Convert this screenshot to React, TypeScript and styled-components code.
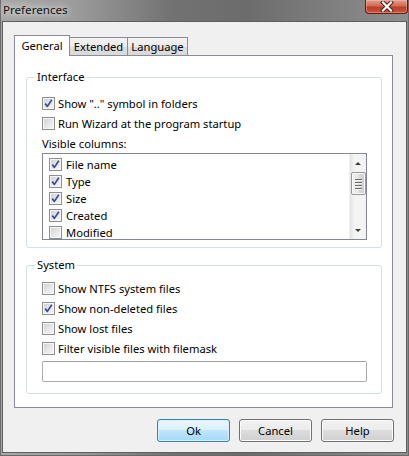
import styled, { createGlobalStyle, css } from "styled-components";

const GlobalStyle = createGlobalStyle`
  html, body {
    margin: 0;
    padding: 0;
    background: #8c8c8c;
  }
  * {
    box-sizing: border-box;
  }
`;

const uiFont = `"Noto Sans", "Open Sans", Arial, sans-serif`;

const columns = [
  { name: "File name", checked: true },
  { name: "Type", checked: true },
  { name: "Size", checked: true },
  { name: "Created", checked: true },
  { name: "Modified", checked: false },
];

const systemOptions = [
  { label: "Show NTFS system files", checked: false },
  { label: "Show non-deleted files", checked: true },
  { label: "Show lost files", checked: false },
  { label: "Filter visible files with filemask", checked: false },
];

const CheckBox = ({ checked }: { checked: boolean }) => (
  <Box>
    {checked && (
      <svg width="11" height="11" viewBox="0 0 11 11">
        <path
          d="M2.2 5.6 L4.4 8.4 L8.8 1.8"
          fill="none"
          stroke="#3a4d9c"
          strokeWidth="1.7"
          strokeLinejoin="round"
        />
      </svg>
    )}
  </Box>
);

const Option = ({ label, checked }: { label: string; checked: boolean }) => (
  <OptionRow>
    <CheckBox checked={checked} />
    <span>{label}</span>
  </OptionRow>
);

const App = () => {
  return (
    <>
      <GlobalStyle />
      <Window>
        <TitleBar>
          <Title>Preferences</Title>
          <CloseButton>
            <svg width="14" height="11" viewBox="0 0 14 11">
              <path
                d="M3 1.5 L11 9.5 M11 1.5 L3 9.5"
                stroke="#4a1a12"
                strokeWidth="4"
                strokeLinecap="square"
              />
              <path
                d="M3 1.5 L11 9.5 M11 1.5 L3 9.5"
                stroke="#ffffff"
                strokeWidth="2.2"
                strokeLinecap="square"
              />
            </svg>
          </CloseButton>
        </TitleBar>
        <Client>
          <TabRow>
            <Tab $active $w={56}>General</Tab>
            <Tab $w={59}>Extended</Tab>
            <Tab $w={61}>Language</Tab>
          </TabRow>
          <Panel>
            <Group>
              <Legend>Interface</Legend>
              <GroupBody>
                <Option label={'Show ".." symbol in folders'} checked />
                <Option label="Run Wizard at the program startup" checked={false} />
                <FieldLabel>Visible columns:</FieldLabel>
                <ListBox>
                  <ListItems>
                    {columns.map((c) => (
                      <ListRow key={c.name}>
                        <CheckBox checked={c.checked} />
                        <span>{c.name}</span>
                      </ListRow>
                    ))}
                  </ListItems>
                  <ScrollBar>
                    <ArrowUp />
                    <Thumb>
                      <Grip />
                      <Grip />
                      <Grip />
                      <Grip />
                    </Thumb>
                    <Track />
                    <ArrowDown />
                  </ScrollBar>
                </ListBox>
              </GroupBody>
            </Group>
            <Group $system>
              <Legend>System</Legend>
              <GroupBody>
                {systemOptions.map((o) => (
                  <Option key={o.label} label={o.label} checked={o.checked} />
                ))}
                <MaskInput type="text" />
              </GroupBody>
            </Group>
          </Panel>
          <ButtonRow>
            <Button $default>Ok</Button>
            <Button>Cancel</Button>
            <Button>Help</Button>
          </ButtonRow>
        </Client>
      </Window>
    </>
  );
};

const Window = styled.div`
  width: 409px;
  height: 456px;
  display: flex;
  flex-direction: column;
  padding: 0 2px 3px 2px;
  background: linear-gradient(
    to right,
    #a8a8a8 0%,
    #9c9c9c 18%,
    #727272 42%,
    #6c6c6c 60%,
    #7e7e7e 80%,
    #8e8e8e 100%
  );
  box-shadow: inset 1px 0 0 #6a6a6a, inset -1px 0 0 #6a6a6a, inset 0 -1px 0 #6a6a6a;
  font-family: ${uiFont};
  font-size: 11.2px;
  color: #000;
`;

const TitleBar = styled.div`
  height: 21px;
  display: flex;
  align-items: flex-start;
  justify-content: space-between;
`;

const Title = styled.div`
  padding: 2px 0 0 1px;
  font-size: 11.6px;
  line-height: 16px;
  color: #111;
  text-shadow: 0 0 6px rgba(255, 255, 255, 0.9), 0 0 10px rgba(255, 255, 255, 0.7);
`;

const CloseButton = styled.div`
  width: 43px;
  height: 14px;
  margin-right: -1px;
  display: flex;
  align-items: center;
  justify-content: center;
  border: 1px solid #5a2016;
  border-top: none;
  border-radius: 0 0 4px 4px;
  background: linear-gradient(to bottom, #e3a08f 0%, #d06a55 45%, #bd3d26 55%, #c9553a 100%);
  box-shadow: inset 0 0 0 1px rgba(255, 200, 180, 0.4);
`;

const Client = styled.div`
  flex: 1;
  display: flex;
  flex-direction: column;
  padding: 13px 13px 10px 11px;
  background: #f0f0f0;
  border: 1px solid #5e5e5e;
`;

const TabRow = styled.div`
  display: flex;
  align-items: flex-end;
  height: 20px;
`;

const Tab = styled.div<{ $active?: boolean; $w: number }>`
  width: ${(p) => p.$w}px;
  height: 18px;
  margin-left: -1px;
  display: flex;
  align-items: center;
  justify-content: center;
  border: 1px solid #898c95;
  border-bottom: none;
  background: linear-gradient(to bottom, #f3f3f3 0%, #ebebeb 50%, #dddddd 51%, #d9d9d9 100%);
  line-height: 16px;
  padding-top: 1px;
  ${(p) =>
    p.$active &&
    css`
      height: 21px;
      margin-left: 0;
      margin-bottom: -1px;
      background: #ffffff;
      position: relative;
      z-index: 1;
      align-items: flex-start;
      padding-top: 2px;
    `}
`;

const Panel = styled.div`
  height: 353px;
  display: flex;
  flex-direction: column;
  gap: 9px;
  padding: 13px 10px 0 11px;
  background: #ffffff;
  border: 1px solid #898c95;
`;

const Group = styled.fieldset<{ $system?: boolean }>`
  margin: 0;
  padding: ${(p) => (p.$system ? "5px 0 11px 8px" : "8px 0 7px 8px")};
  border: 1px solid #d5dfe5;
  border-radius: 3px;
  min-width: 0;
`;

const Legend = styled.legend`
  padding: 0 2px;
  line-height: 16px;
  height: 16px;
`;

const GroupBody = styled.div`
  display: flex;
  flex-direction: column;
  padding: 0 14px 0 7px;
`;

const OptionRow = styled.div`
  height: 20px;
  display: flex;
  align-items: center;
  gap: 3px;
  white-space: nowrap;
`;

const Box = styled.span`
  width: 13px;
  height: 13px;
  flex: none;
  display: flex;
  align-items: center;
  justify-content: center;
  border: 1px solid #8e8f8f;
  background: linear-gradient(135deg, #cbcdd0 0%, #e6e6e7 50%, #f7f7f7 100%);
  box-shadow: inset 0 0 0 1px #f6f6f6;
`;

const FieldLabel = styled.div`
  height: 20px;
  display: flex;
  align-items: center;
`;

const ListBox = styled.div`
  height: 87px;
  display: flex;
  border: 1px solid #828790;
  background: #ffffff;
  overflow: hidden;
`;

const ListItems = styled.div`
  flex: 1;
  padding: 2px 0 0 6px;
`;

const ListRow = styled.div`
  height: 17px;
  display: flex;
  align-items: center;
  gap: 4px;
`;

const ScrollBar = styled.div`
  width: 17px;
  display: flex;
  flex-direction: column;
  align-items: center;
  background: linear-gradient(to right, #e5e5e5 0%, #f5f5f5 30%, #f3f3f3 100%);
  border-left: 1px solid #f0f0f0;
`;

const arrow = css`
  width: 0;
  height: 0;
  border-left: 3px solid transparent;
  border-right: 3px solid transparent;
`;

const ArrowUp = styled.div`
  ${arrow};
  margin-top: 8px;
  margin-bottom: 7px;
  border-bottom: 3px solid #3f3f3f;
`;

const ArrowDown = styled.div`
  ${arrow};
  margin-bottom: 7px;
  border-top: 3px solid #3f3f3f;
`;

const Thumb = styled.div`
  width: 15px;
  height: 23px;
  display: flex;
  flex-direction: column;
  align-items: center;
  justify-content: center;
  gap: 2px;
  border: 1px solid #979797;
  border-radius: 2px;
  background: linear-gradient(to right, #f1f1f1 0%, #e6e6e6 50%, #d9d9d9 51%, #cfcfcf 100%);
  box-shadow: inset 0 0 0 1px #fbfbfb;
`;

const Grip = styled.div`
  width: 7px;
  height: 1px;
  background: #6a6a6a;
  box-shadow: 0 1px 0 #f4f4f4;
`;

const Track = styled.div`
  flex: 1;
`;

const MaskInput = styled.input`
  margin-top: 3px;
  height: 21px;
  width: 100%;
  border: 1px solid #acacac;
  border-top-color: #a0a0a0;
  border-radius: 2px;
  background: #ffffff;
  outline: none;
`;

const ButtonRow = styled.div`
  margin-top: 11px;
  margin-right: -1px;
  display: flex;
  justify-content: flex-end;
  gap: 9px;
`;

const Button = styled.button<{ $default?: boolean }>`
  width: 73px;
  height: 23px;
  padding: 0;
  font-family: ${uiFont};
  font-size: 11.2px;
  color: #000;
  border: 1px solid #707070;
  border-radius: 3px;
  background: linear-gradient(to bottom, #f2f2f2 0%, #ebebeb 49%, #dddddd 50%, #cfcfcf 100%);
  box-shadow: inset 0 0 0 1px #fcfcfc;
  ${(p) =>
    p.$default &&
    css`
      border-color: #3c7fb1;
      background: linear-gradient(to bottom, #eaf6fd 0%, #d9f0fc 49%, #bee6fd 50%, #a7d9f5 100%);
      box-shadow: inset 0 0 0 1px #d8f0fb;
    `}
`;

export default App;
